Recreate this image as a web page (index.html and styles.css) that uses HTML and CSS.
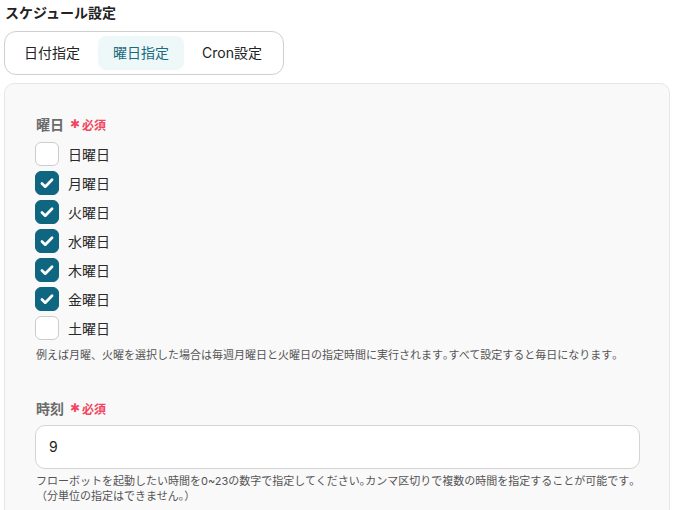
FILE: index.html
```html
<!DOCTYPE html>
<html lang="ja">
<head>
<meta charset="utf-8">
<link rel="stylesheet" href="styles.css">
</head>
<body>
<div class="page">
  <div class="title">スケジュール設定</div>
  <div class="tabs">
    <div class="tab">日付指定</div>
    <div class="tab active">曜日指定</div>
    <div class="tab">Cron設定</div>
  </div>
  <div class="panel">
    <div class="label">曜日<span class="req"><span class="ast">✱</span>必須</span></div>
    <div class="checks">
      <div class="row"><span class="box"></span><span class="day">日曜日</span></div>
      <div class="row"><span class="box on"><svg viewBox="0 0 24 24"><path d="M6.5 12.5l3.6 3.5 7.4-7.5" /></svg></span><span class="day">月曜日</span></div>
      <div class="row"><span class="box on"><svg viewBox="0 0 24 24"><path d="M6.5 12.5l3.6 3.5 7.4-7.5" /></svg></span><span class="day">火曜日</span></div>
      <div class="row"><span class="box on"><svg viewBox="0 0 24 24"><path d="M6.5 12.5l3.6 3.5 7.4-7.5" /></svg></span><span class="day">水曜日</span></div>
      <div class="row"><span class="box on"><svg viewBox="0 0 24 24"><path d="M6.5 12.5l3.6 3.5 7.4-7.5" /></svg></span><span class="day">木曜日</span></div>
      <div class="row"><span class="box on"><svg viewBox="0 0 24 24"><path d="M6.5 12.5l3.6 3.5 7.4-7.5" /></svg></span><span class="day">金曜日</span></div>
      <div class="row"><span class="box"></span><span class="day">土曜日</span></div>
    </div>
    <p class="help">例えば月曜、火曜を選択した場合は毎週月曜日と火曜日の指定時間に実行されます｡すべて設定すると毎日になります｡</p>
    <div class="label label2">時刻<span class="req"><span class="ast">✱</span>必須</span></div>
    <div class="input">9</div>
    <p class="help help2">フローボットを起動したい時間を0~23の数字で指定してください｡カンマ区切りで複数の時間を指定することが可能です｡<br>（分単位の指定はできません｡）</p>
  </div>
</div>
</body>
</html>
```
FILE: styles.css
```css
html, body {
  margin: 0;
  padding: 0;
  background: #ffffff;
}
body {
  font-family: "Inter", "Noto Sans CJK JP", sans-serif;
  color: #222;
  overflow: hidden;
}
.page {
  padding: 3px 6px 0 4px;
}
.title {
  font-size: 14px;
  font-weight: 700;
  line-height: 20px;
  padding-left: 1px;
  color: #222;
}
.tabs {
  margin-top: 8px;
  display: inline-flex;
  gap: 3px;
  padding: 4px;
  border: 1px solid #cfcfcf;
  border-radius: 12px;
  background: #fff;
}
.tab {
  height: 34px;
  line-height: 34px;
  padding: 0 15px;
  font-size: 14px;
  border-radius: 8px;
  color: #222;
}
.tab:last-child {
  padding-right: 17px;
}
.tab.active {
  background: #eef8f8;
  color: #1c6a80;
}
.panel {
  margin-top: 8px;
  background: #f9f9f9;
  border: 1px solid #e6e6e6;
  border-radius: 10px;
  padding: 30px 29px 0 30px;
  height: 440px;
}
.label {
  display: flex;
  align-items: center;
  height: 20px;
  font-size: 14px;
  font-weight: 700;
  color: #6a6a6a;
  padding-left: 1px;
}
.req {
  display: flex;
  align-items: center;
  color: #f2455f;
  font-size: 12px;
  margin-left: 6px;
  font-weight: 700;
}
.ast {
  font-family: "DejaVu Sans", sans-serif;
  font-size: 12px;
  margin-right: 2px;
}
.checks {
  margin-top: 8px;
  display: flex;
  flex-direction: column;
  gap: 5px;
}
.row {
  display: flex;
  align-items: center;
  height: 24px;
}
.box {
  width: 24px;
  height: 24px;
  box-sizing: border-box;
  border: 1px solid #cccccc;
  border-radius: 6px;
  background: #fff;
  display: flex;
  align-items: center;
  justify-content: center;
}
.box.on {
  background: #0e6680;
  border-color: #0e6680;
}
.box svg {
  width: 22px;
  height: 22px;
  fill: none;
  stroke: #fff;
  stroke-width: 3;
  stroke-linecap: round;
  stroke-linejoin: round;
}
.day {
  margin-left: 9px;
  font-size: 14px;
  color: #2a2a2a;
}
.help {
  margin: 7px 0 0 1px;
  font-size: 11px;
  line-height: 16px;
  color: #555;
}
.label2 {
  margin-top: 35px;
}
.input {
  margin-top: 7px;
  height: 44px;
  box-sizing: border-box;
  border: 1px solid #d4d4d4;
  border-radius: 10px;
  background: #fff;
  padding: 0 13px;
  line-height: 42px;
  font-size: 14px;
  color: #222;
}
.help2 {
  margin-top: 5px;
  line-height: 15px;
}
```
